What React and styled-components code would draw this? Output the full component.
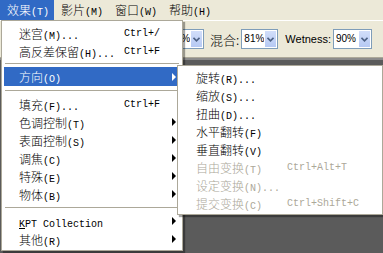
import React from 'react'
import styled, {createGlobalStyle} from 'styled-components'

const GlobalStyle = createGlobalStyle`
  body {
    margin: 0;
    overflow: hidden;
    font-family: "Noto Sans CJK SC", "Liberation Sans", sans-serif;
  }
`

const Window = styled.div`
  position: relative;
  width: 383px;
  height: 253px;
  display: flex;
  flex-direction: column;
  background-color: #5b5b5b;
  overflow: hidden;
`

const MenuBar = styled.div`
  display: flex;
  height: 20px;
  background-color: #ece9d8;
`

const MenuTitle = styled.div`
  padding: 0 5px 0 7px;
  width: 42px;
  line-height: 20px;
  font-size: 12px;
  font-weight: 300;
  white-space: nowrap;
  color: ${p => (p.$active ? '#fff' : '#000')};
  background-color: ${p => (p.$active ? '#316ac5' : 'transparent')};
`

const Acc = styled.span`
  font-family: "Liberation Mono", monospace;
  font-size: 10px;
  font-weight: 400;
`

const Toolbar = styled.div`
  display: flex;
  align-items: center;
  justify-content: flex-end;
  height: 36px;
  padding: 0 11px 0 0;
  background-color: #ece9d8;
  border-top: 1px solid #fff;
  border-bottom: 1px solid #aca899;
`

const ToolLabel = styled.span`
  font-family: ${p => (p.$latin ? '"Liberation Sans", sans-serif' : '"Noto Sans CJK SC", sans-serif')};
  font-size: ${p => (p.$latin ? '11px' : '13px')};
  font-weight: ${p => (p.$latin ? 400 : 300)};
  color: #000;
  margin: 0 ${p => p.$after || 0}px 0 ${p => p.$before || 0}px;
  white-space: nowrap;
`

const Combo = styled.div`
  display: flex;
  height: 20px;
  border: 1px solid #7f9db9;
  box-sizing: border-box;
  background-color: #fff;
`

const ComboInput = styled.div`
  width: ${p => p.$w}px;
  padding-left: 2px;
  text-align: ${p => (p.$right ? 'right' : 'left')};
  font-family: "Liberation Sans", sans-serif;
  font-size: 10px;
  line-height: 18px;
  color: #000;
  overflow: hidden;
  white-space: nowrap;
`

const ComboButton = styled.div`
  width: 11px;
  display: flex;
  align-items: center;
  justify-content: center;
  margin: 1px;
  background: linear-gradient(#d2defa, #b6c9f3);
`

const Canvas = styled.div`
  flex: 1;
  background-color: #5b5b5b;
  border-top: 2px solid #8c8c8c;
`

const DropMenu = styled.div`
  position: absolute;
  top: ${p => p.$top}px;
  left: ${p => p.$left}px;
  width: ${p => p.$width}px;
  box-sizing: border-box;
  padding: ${p => p.$padTop}px 2px 2px;
  background-color: #fff;
  border: 1px solid #aca899;
  box-shadow: 2px 2px 1px rgba(0, 0, 0, 0.35);
`

const Row = styled.div`
  display: grid;
  grid-template-columns: ${p => p.$col}px 1fr 12px;
  align-items: center;
  height: ${p => (p.$active ? 19 : 18)}px;
  padding: 0 4px 0 ${p => p.$pad}px;
  font-size: 12px;
  font-weight: 300;
  white-space: nowrap;
  color: ${p => (p.$active ? '#fff' : p.$disabled ? '#aca899' : '#000')};
  background-color: ${p => (p.$active ? '#316ac5' : 'transparent')};
`

const Shortcut = styled.span`
  font-family: "Liberation Mono", monospace;
  font-size: 10px;
  font-weight: 400;
`

const Arrow = styled.span`
  justify-self: end;
  width: 0;
  height: 0;
  border-top: 4px solid transparent;
  border-bottom: 4px solid transparent;
  border-left: 4px solid ${p => (p.$active ? '#fff' : '#000')};
`

const Separator = styled.div`
  height: 1px;
  margin: ${p => p.$m}px 1px;
  background-color: #aca899;
`

const Underline = styled.span`
  text-decoration: underline;
`

function Chevron() {
  return (
    <svg width="7" height="5" viewBox="0 0 7 5">
      <path d="M0.5 0.8 L3.5 3.8 L6.5 0.8" fill="none" stroke="#4d6185" strokeWidth="1.6" />
    </svg>
  )
}

function ComboBox({value, width, right}) {
  return (
    <Combo>
      <ComboInput $w={width} $right={right}>{value}</ComboInput>
      <ComboButton><Chevron /></ComboButton>
    </Combo>
  )
}

const mainItems = [
  {cn: '迷宫', acc: '(M)...', key: 'Ctrl+/'},
  {cn: '高反差保留', acc: '(H)...', key: 'Ctrl+F'},
  {sep: 3},
  {cn: '方向', acc: '(O)', sub: true, active: true},
  {sep: 4},
  {cn: '填充', acc: '(F)...', key: 'Ctrl+F'},
  {cn: '色调控制', acc: '(T)', sub: true},
  {cn: '表面控制', acc: '(S)', sub: true},
  {cn: '调焦', acc: '(C)', sub: true},
  {cn: '特殊', acc: '(E)', sub: true},
  {cn: '物体', acc: '(B)', sub: true},
  {sep: 4},
  {kpt: true, sub: true},
  {cn: '其他', acc: '(R)', sub: true},
]

const subItems = [
  {cn: '旋转', acc: '(R)...'},
  {cn: '缩放', acc: '(S)...'},
  {cn: '扭曲', acc: '(D)...'},
  {cn: '水平翻转', acc: '(F)'},
  {cn: '垂直翻转', acc: '(V)'},
  {cn: '自由变换', acc: '(T)', key: 'Ctrl+Alt+T', disabled: true},
  {cn: '设定变换', acc: '(N)...', disabled: true},
  {cn: '提交变换', acc: '(C)', key: 'Ctrl+Shift+C', disabled: true},
]

function MenuItems({items, col, pad}) {
  return items.map((item, i) => {
    if (item.sep) return <Separator key={i} $m={item.sep} />
    return (
      <Row key={i} $col={col} $pad={pad} $active={item.active} $disabled={item.disabled}>
        <span>
          {item.kpt
            ? <Acc><Underline>K</Underline>PT Collection</Acc>
            : <>{item.cn}<Acc>{item.acc}</Acc></>}
        </span>
        <Shortcut>{item.key}</Shortcut>
        {item.sub ? <Arrow $active={item.active} /> : <span />}
      </Row>
    )
  })
}

export default function App() {
  return (
    <>
      <GlobalStyle />
      <Window>
        <MenuBar>
          <MenuTitle $active>效果<Acc>(T)</Acc></MenuTitle>
          <MenuTitle>影片<Acc>(M)</Acc></MenuTitle>
          <MenuTitle>窗口<Acc>(W)</Acc></MenuTitle>
          <MenuTitle>帮助<Acc>(H)</Acc></MenuTitle>
        </MenuBar>
        <Toolbar>
          <ComboBox value="%" width={16} right />
          <ToolLabel $before={6} $after={2}>混合:</ToolLabel>
          <ComboBox value="81%" width={20} />
          <ToolLabel $latin $before={7} $after={2}>Wetness:</ToolLabel>
          <ComboBox value="90%" width={22} />
        </Toolbar>
        <Canvas />

        <DropMenu $top={20} $left={1} $width={182} $padTop={3}>
          <MenuItems items={mainItems} col={105} pad={15} />
        </DropMenu>

        <DropMenu $top={65} $left={177} $width={206} $padTop={2}>
          <MenuItems items={subItems} col={91} pad={16} />
        </DropMenu>
      </Window>
    </>
  )
}
